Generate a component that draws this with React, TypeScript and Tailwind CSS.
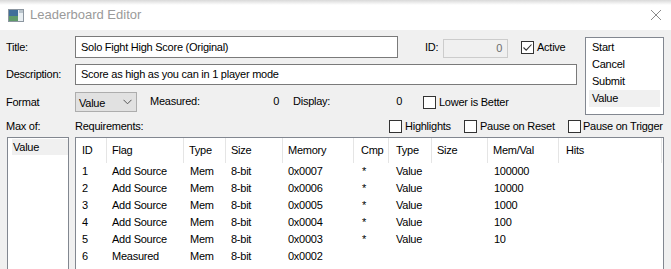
import React from "react";

const Check = ({ checked = false }: { checked?: boolean }) => (
  <div className="w-[13px] h-[13px] border border-[#333333] bg-white flex items-center justify-center shrink-0">
    {checked && (
      <svg width="11" height="11" viewBox="0 0 11 11">
        <path d="M1.5 5.5 L4.2 8.2 L9.5 2.5" fill="none" stroke="#333333" strokeWidth="1.1" />
      </svg>
    )}
  </div>
);

const cols = ["ID", "Flag", "Type", "Size", "Memory", "Cmp", "Type", "Size", "Mem/Val", "Hits"];

const rows = [
  ["1", "Add Source", "Mem", "8-bit", "0x0007", "*", "Value", "", "100000", ""],
  ["2", "Add Source", "Mem", "8-bit", "0x0006", "*", "Value", "", "10000", ""],
  ["3", "Add Source", "Mem", "8-bit", "0x0005", "*", "Value", "", "1000", ""],
  ["4", "Add Source", "Mem", "8-bit", "0x0004", "*", "Value", "", "100", ""],
  ["5", "Add Source", "Mem", "8-bit", "0x0003", "*", "Value", "", "10", ""],
  ["6", "Measured", "Mem", "8-bit", "0x0002", "", "", "", "", ""],
];

const grid =
  "grid grid-cols-[31px_77px_42px_57px_71px_35px_43px_56px_71px_103px]";

export default function App() {
  return (
    <div className="w-[671px] h-[269px] overflow-hidden flex flex-col bg-[#f0f0f0] text-black font-['Liberation_Sans',Arial,sans-serif] text-[11px] tracking-[-0.25px]">
      {/* title bar */}
      <div className="h-[30px] shrink-0 flex items-center bg-[linear-gradient(to_bottom,#d9d9d9_0px,#ffffff_5px)] tracking-normal">
        <svg className="ml-[8px]" width="16" height="13" viewBox="0 0 16 13">
          <rect x="0.5" y="0.5" width="15" height="12" fill="#e8eef2" stroke="#8c96a0" />
          <rect x="1" y="1" width="9" height="11" fill="#3f6e9a" />
          <rect x="1" y="7" width="9" height="5" fill="#5f9a6a" />
          <rect x="11" y="1" width="4" height="3" fill="#b9c4cc" />
        </svg>
        <span className="ml-[6px] text-[13px] text-[#9a9a9a]">Leaderboard Editor</span>
        <svg className="ml-auto mr-[10px]" width="10" height="10" viewBox="0 0 10 10">
          <path d="M0 0 L10 10 M10 0 L0 10" stroke="#8a8a8a" strokeWidth="1" />
        </svg>
      </div>

      {/* body */}
      <div className="flex-1 flex flex-col px-[6px] pt-[6px]">
        <div className="flex items-start h-[76px]">
          <div className="w-[571px] flex flex-col">
            {/* Title row */}
            <div className="flex items-center h-[22px]">
              <span className="w-[69px]">Title:</span>
              <div className="w-[323px] h-[22px] border border-[#7a7a7a] bg-white flex items-center pl-[5px]">
                Solo Fight High Score (Original)
              </div>
              <span className="ml-[27px] w-[18px]">ID:</span>
              <div className="w-[65px] h-[19px] mt-[3px] border border-[#cccccc] bg-[#f0f0f0] text-[#6d6d6d] flex items-center justify-end pr-[5px]">
                0
              </div>
              <div className="ml-[13px] flex items-center">
                <Check checked />
                <span className="ml-[3px]">Active</span>
              </div>
            </div>
            {/* Description row */}
            <div className="flex items-center h-[21px] mt-[6px]">
              <span className="w-[69px]">Description:</span>
              <div className="w-[502px] h-[21px] border border-[#7a7a7a] bg-white flex items-center pl-[5px]">
                Score as high as you can in 1 player mode
              </div>
            </div>
            {/* Format row */}
            <div className="flex items-center h-[20px] mt-[7px]">
              <span className="w-[69px]">Format</span>
              <div className="w-[62px] h-[20px] border border-[#adadad] bg-[#e1e1e1] flex items-center pl-[3px] pr-[4px]">
                <span className="mt-[2px]">Value</span>
                <svg className="ml-auto" width="9" height="6" viewBox="0 0 9 6">
                  <path d="M0.5 0.8 L4.5 4.8 L8.5 0.8" fill="none" stroke="#555555" strokeWidth="1" />
                </svg>
              </div>
              <div className="ml-[13px] w-[130px] flex justify-between pr-[1px] -mt-[2px]">
                <span>Measured:</span>
                <span>0</span>
              </div>
              <div className="ml-[13px] w-[109px] flex justify-between -mt-[2px]">
                <span>Display:</span>
                <span>0</span>
              </div>
              <div className="ml-[21px] flex items-center">
                <Check />
                <span className="ml-[3px]">Lower is Better</span>
              </div>
            </div>
          </div>
          {/* right listbox */}
          <div className="ml-[8px] mt-[1px] w-[79px] h-[78px] shrink-0 border border-[#828790] bg-white pt-[1px] flex flex-col">
            {["Start", "Cancel", "Submit", "Value"].map((s) => (
              <div
                key={s}
                className={
                  s === "Value"
                    ? "h-[17px] flex items-center mx-[3px] pl-[3px] bg-[#f0f0f0]"
                    : "h-[17px] flex items-center pl-[6px]"
                }
              >
                {s}
              </div>
            ))}
          </div>
        </div>

        {/* labels row */}
        <div className="flex items-center h-[15px] mt-[7px]">
          <span className="w-[69px]">Max of:</span>
          <span className="w-[314px]">Requirements:</span>
          <div className="w-[75px] flex items-center">
            <Check />
            <span className="ml-[3px]">Highlights</span>
          </div>
          <div className="w-[104px] flex items-center">
            <Check />
            <span className="ml-[3px]">Pause on Reset</span>
          </div>
          <div className="flex items-center">
            <Check />
            <span className="ml-[2px]">Pause on Trigger</span>
          </div>
        </div>

        {/* lists */}
        <div className="flex mt-[3px]">
          <div className="ml-[1px] w-[62px] h-[140px] border border-[#828790] bg-white pt-[1px]">
            <div className="ml-[4px] h-[16px] bg-[#f0f0f0] flex items-center pl-[1px]">Value</div>
          </div>
          <div className="ml-[6px] w-[589px] h-[140px] border border-[#828790] bg-white">
            <div className={`${grid} h-[25px]`}>
              {cols.map((c, i) => (
                <div
                  key={i}
                  className={`border-r border-[#e5e5e5] flex items-center ${i === 0 ? "pl-[6px]" : i === 5 || i === 6 || i === 9 ? "pl-[7px]" : "pl-[5px]"}`}
                >
                  {c}
                </div>
              ))}
            </div>
            {rows.map((r, ri) => (
              <div key={ri} className={`${grid} h-[17px]`}>
                {r.map((c, i) => (
                  <div
                    key={i}
                    className={`flex items-center ${i === 0 ? "pl-[6px]" : i === 5 ? "pl-[8px]" : i === 6 || i === 9 ? "pl-[7px]" : i === 2 || i === 8 ? "pl-[6px]" : "pl-[5px]"}`}
                  >
                    {c}
                  </div>
                ))}
              </div>
            ))}
          </div>
        </div>
      </div>
    </div>
  );
}
